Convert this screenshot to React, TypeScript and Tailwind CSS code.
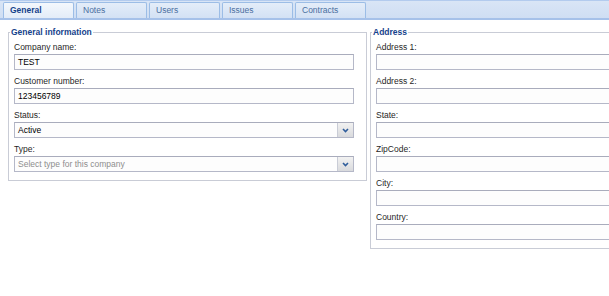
const tabs = ['General', 'Notes', 'Users', 'Issues', 'Contracts'];

function TextField({ label, value, placeholder, select }: { label: string; value?: string; placeholder?: string; select?: boolean }) {
  return (
    <div className="flex flex-col">
      <label className="h-[14px] leading-[14px] text-[#1f1f1f]">{label}</label>
      <div className="flex h-[16px] border border-[#b5b8c8] border-t-[#a9acbc] bg-[#fdfdfd]">
        <div className={`flex-1 pl-[3px] leading-[14px] ${value ? 'text-black' : 'text-[#8e8e8e]'}`}>
          {value ?? placeholder ?? ''}
        </div>
        {select && (
          <div className="flex w-[16px] items-center justify-center border-l border-[#c9ccd6] bg-gradient-to-b from-[#f2f2f2] to-[#d9dadd]">
            <svg width="7" height="5" viewBox="0 0 7 5">
              <path d="M1 1 L3.5 3.5 L6 1" fill="none" stroke="#2f5d9b" strokeWidth="1.6" />
            </svg>
          </div>
        )}
      </div>
    </div>
  );
}

export default function App() {
  return (
    <div className="h-[296px] w-[609px] overflow-hidden bg-white font-['Liberation_Sans',Arial,sans-serif] text-[8.5px]">
      <div className="flex h-[20px] items-end gap-[2px] border-t border-b-2 border-t-[#b3cbee] border-b-[#a6c1e9] bg-gradient-to-b from-[#d9e5f6] to-[#cfdef3] pl-[3px]">
        {tabs.map((tab, i) => (
          <div
            key={tab}
            className={`h-[16px] w-[71px] shrink-0 rounded-t-[2px] border border-b-0 border-[#9cbde6] pl-[6px] leading-[15px] ${
              i === 0
                ? 'bg-gradient-to-b from-[#f4f8fd] to-[#e3ecf8] font-bold text-[#15428b]'
                : 'bg-gradient-to-b from-[#e4edf9] to-[#d3e1f4] text-[#4a6e9f]'
            }`}
          >
            {tab}
          </div>
        ))}
      </div>

      <div className="flex items-start gap-[3px] pl-[8px] pt-[5px]">
        <fieldset className="w-[359px] shrink-0 border border-[#c9ccd6] px-[1px] pb-[8px]">
          <legend className="px-[1px] leading-[14px] font-bold text-[#15428b]">General information</legend>
          <div className="flex flex-col gap-[4px] pl-[4px] pr-[11px] pt-[1px]">
            <TextField label="Company name:" value="TEST" />
            <TextField label="Customer number:" value="123456789" />
            <TextField label="Status:" value="Active" select />
            <TextField label="Type:" placeholder="Select type for this company" select />
          </div>
        </fieldset>

        <fieldset className="w-[270px] shrink-0 border border-[#c9ccd6] px-[1px] pb-[8px]">
          <legend className="px-[1px] leading-[14px] font-bold text-[#15428b]">Address</legend>
          <div className="flex flex-col gap-[4px] pl-[4px] pr-[11px] pt-[1px]">
            <TextField label="Address 1:" />
            <TextField label="Address 2:" />
            <TextField label="State:" />
            <TextField label="ZipCode:" />
            <TextField label="City:" />
            <TextField label="Country:" />
          </div>
        </fieldset>
      </div>
    </div>
  );
}
